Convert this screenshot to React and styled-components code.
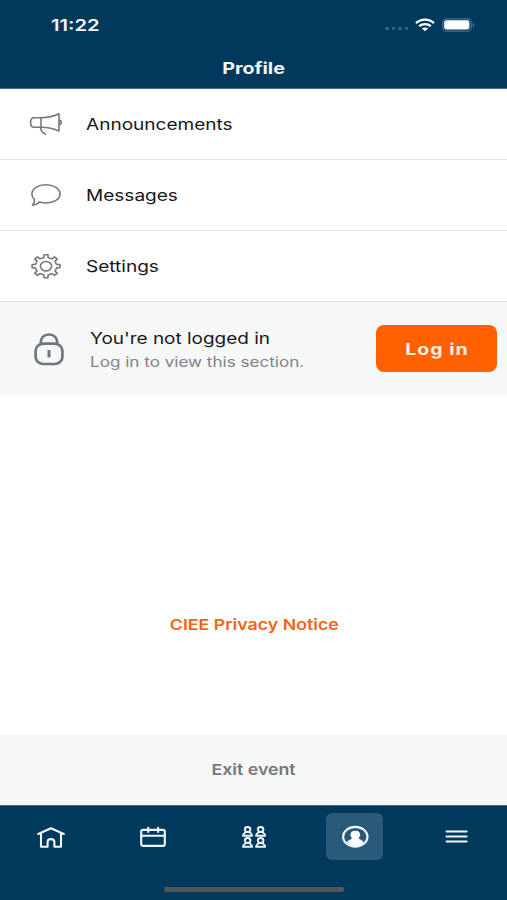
import React from 'react'
import styled, { createGlobalStyle } from 'styled-components'

// eight-toothed gear outline, slightly wider than tall
const gearPath = (cx, cy, rx, ry) => {
  const points = []
  const at = (deg, k) => {
    const a = (deg * Math.PI) / 180
    return `${(cx + Math.sin(a) * rx * k).toFixed(2)} ${(cy - Math.cos(a) * ry * k).toFixed(2)}`
  }
  for (let i = 0; i < 8; i++) {
    const d = i * 45
    points.push(at(d - 11, 0.77), at(d - 8, 1), at(d + 8, 1), at(d + 11, 0.77), at(d + 22.5, 0.75))
  }
  return `M${points.join('L')}Z`
}

const MegaphoneIcon = () => (
  <LineIcon width="36" height="30" viewBox="0 0 36 30">
    <path d="M13 8.8H6C3.4 8.8 2.6 10.6 2.6 13.5S3.4 18.2 6 18.2H13Z" />
    <path d="M13 8.8C19 8.6 26 7.3 31 4.8V21.9C26 19.7 19 18.4 13 18.2" />
    <path d="M31 11.2C34 11.3 34 15.6 31 15.7" />
    <path d="M12.4 18.4C12.8 21.6 14.5 23.9 17.3 25.1" />
  </LineIcon>
)

const MessageIcon = () => (
  <LineIcon width="36" height="30" viewBox="0 0 36 30">
    <path d="M6.4 19.4C4.7 17.8 3.9 15.9 3.9 13.9C3.9 8.7 10.2 4.8 18 4.8S32 8.7 32 13.9S25.8 23 18 23C15.7 23 13.6 22.7 11.7 22.1C9.6 23.9 7.3 25.2 4.5 25.2C6 23.6 6.7 21.5 6.4 19.4Z" />
  </LineIcon>
)

const GearIcon = () => (
  <LineIcon width="36" height="30" viewBox="0 0 36 30">
    <path d={gearPath(18, 15.2, 14.1, 11.6)} />
    <ellipse cx="18" cy="15.2" rx="5.6" ry="4.7" />
  </LineIcon>
)

const LockIcon = () => (
  <LockSvg width="34" height="36" viewBox="0 0 34 36">
    <path d="M8.6 12.6C8.6 7 12 3.5 17 3.5S25.4 7 25.4 12.6" />
    <rect x="3.6" y="12.7" width="26.8" height="20.3" rx="8" ry="7" />
    <path d="M17 19V26.4" strokeWidth="3" />
  </LockSvg>
)

const HomeIcon = () => (
  <TabSvg width="30" height="24" viewBox="0 0 30 24">
    <path d="M2.2 9L15 3.2L27.8 9" />
    <path d="M5 8.2V21.8H11.6V17C11.6 13.2 18.4 13.2 18.4 17V21.8H25V8.2" />
  </TabSvg>
)

const CalendarIcon = () => (
  <TabSvg width="30" height="24" viewBox="0 0 30 24">
    <rect x="4.2" y="4.9" width="23.6" height="16" rx="1.8" />
    <path d="M4.2 10.7H27.8M11.3 2.8V6.9M21.1 2.8V6.9" />
  </TabSvg>
)

const Person = ({ x, y }) => (
  <g transform={`translate(${x} ${y})`}>
    <ellipse cx="5.3" cy="3.3" rx="2.8" ry="2.5" />
    <path d="M3.7 5.6C3.6 6.7 .8 6.7 .7 9.5H9.9C9.8 6.7 7 6.7 6.9 5.6" />
  </g>
)

const PeopleIcon = () => (
  <TabSvg width="30" height="24" viewBox="0 0 30 24" $thin>
    <Person x={4.3} y={1.2} />
    <Person x={17.3} y={1.2} />
    <Person x={4.3} y={12.2} />
    <Person x={17.3} y={12.2} />
  </TabSvg>
)

const ProfileIcon = () => (
  <TabSvg width="30" height="24" viewBox="0 0 30 24">
    <ellipse cx="15.3" cy="11.8" rx="12.2" ry="9.9" />
    <path
      d="M15.3 5.7C18.4 5.7 20.1 7.2 20 9.4C20.4 9.8 20.3 11 19.6 11.3C19.4 12.2 19 12.8 18.7 13.2C19.4 14.8 22.9 14.8 23.7 17.8C19 22.2 11.6 22.2 6.9 17.8C7.7 14.8 11.2 14.8 11.9 13.2C11.6 12.8 11.2 12.2 11 11.3C10.3 11 10.2 9.8 10.6 9.4C10.5 7.2 12.2 5.7 15.3 5.7Z"
      fill="#fff"
      stroke="none"
    />
  </TabSvg>
)

const MenuIcon = () => (
  <TabSvg width="30" height="24" viewBox="0 0 30 24">
    <path d="M5.6 6.5H25.6M5.6 11.5H25.6M5.6 16.5H25.6" />
  </TabSvg>
)

const WifiIcon = () => (
  <svg width="20" height="14" viewBox="0 0 20 14" fill="none" stroke="#fff" strokeWidth="2.3">
    <path d="M1 5.1C6 .4 14 .4 19 5.1" />
    <path d="M4.2 8.2C7.4 5.3 12.6 5.3 15.8 8.2" />
    <path d="M10 13.2L6.9 10.6C8.6 9.2 11.4 9.2 13.1 10.6Z" fill="#fff" stroke="none" />
  </svg>
)

const BatteryIcon = () => (
  <svg width="33" height="14" viewBox="0 0 33 14">
    <rect x=".8" y=".8" width="28.4" height="12.4" rx="4" fill="none" stroke="#47708f" strokeWidth="1.3" />
    <rect x="2.2" y="2.2" width="25.2" height="9.4" rx="2.4" fill="#fff" />
    <path d="M30.6 4.8C33 5.4 33 8.6 30.6 9.2Z" fill="#47708f" />
  </svg>
)

const ROWS = [
  { label: 'Announcements', Icon: MegaphoneIcon },
  { label: 'Messages', Icon: MessageIcon },
  { label: 'Settings', Icon: GearIcon },
]

const TABS = [
  { name: 'Home', Icon: HomeIcon },
  { name: 'Calendar', Icon: CalendarIcon },
  { name: 'People', Icon: PeopleIcon },
  { name: 'Profile', Icon: ProfileIcon, active: true },
  { name: 'Menu', Icon: MenuIcon },
]

const App = () => {
  return (
    <Screen>
      <GlobalStyle />
      <Header>
        <StatusBar>
          <Clock $stretch={1.26}>11:22</Clock>
          <StatusIcons>
            <Signal>
              <i />
              <i />
              <i />
              <i />
            </Signal>
            <WifiIcon />
            <BatteryIcon />
          </StatusIcons>
        </StatusBar>
        <Title $stretch={1.23}>Profile</Title>
      </Header>

      <List>
        {ROWS.map(({ label, Icon }) => (
          <Row key={label}>
            <Icon />
            <RowLabel $stretch={1.19}>{label}</RowLabel>
          </Row>
        ))}
      </List>

      <LoginPanel>
        <LockIcon />
        <LoginText>
          <LoginTitle>You're not logged in</LoginTitle>
          <LoginHint $stretch={1.22}>Log in to view this section.</LoginHint>
        </LoginText>
        <LoginBtn>
          <BtnLabel $stretch={1.22}>Log in</BtnLabel>
        </LoginBtn>
      </LoginPanel>

      <Body>
        <Notice>CIEE Privacy Notice</Notice>
      </Body>

      <ExitBar>
        <ExitLabel>Exit event</ExitLabel>
      </ExitBar>

      <Footer>
        <Tabs>
          {TABS.map(({ name, Icon, active }) => (
            <Tab key={name} aria-label={name} $active={active}>
              <Icon />
            </Tab>
          ))}
        </Tabs>
        <HomeBar />
      </Footer>
    </Screen>
  )
}

const GlobalStyle = createGlobalStyle`
  body {
    margin: 0;
    background: #fff;
  }
  * {
    box-sizing: border-box;
  }
`

const Screen = styled.div`
  width: 507px;
  height: 900px;
  display: flex;
  flex-direction: column;
  overflow: hidden;
  background-color: #fff;
  font-family: Inter, 'Liberation Sans', sans-serif;
`

// all lettering is set wide
const Wide = styled.span`
  display: block;
  width: max-content;
  font-size: 16px;
  line-height: 20px;
  white-space: nowrap;
  transform: scaleX(${({ $stretch }) => $stretch || 1.185});
  transform-origin: left center;
`

const Header = styled.header`
  height: 89px;
  flex: none;
  display: flex;
  flex-direction: column;
  align-items: center;
  background-color: #01395c;
  border-bottom: 1px solid #4a6c8b;
`

const StatusBar = styled.div`
  width: 100%;
  height: 48px;
  display: flex;
  justify-content: space-between;
  align-items: center;
  padding: 2px 32px 0 51px;
`

const Clock = styled(Wide)`
  font-weight: 600;
  color: #f1f6ff;
`

const StatusIcons = styled.div`
  display: flex;
  align-items: center;
  gap: 7px;
  padding-bottom: 1px;
`

const Signal = styled.div`
  display: flex;
  gap: 3px;
  padding-top: 8px;
  i {
    width: 3.4px;
    height: 3px;
    border-radius: 50%;
    background-color: #3f6885;
  }
`

const Title = styled(Wide)`
  margin: 10px 0 0 1px;
  font-weight: 700;
  color: #f1f6ff;
  transform-origin: center;
`

const List = styled.div`
  flex: none;
`

const Row = styled.div`
  height: 71px;
  display: flex;
  align-items: center;
  gap: 22px;
  padding-left: 28px;
  border-bottom: 1px solid #e4e5e6;
`

const RowLabel = styled(Wide)`
  color: #17181a;
`

const LineIcon = styled.svg`
  flex: none;
  fill: none;
  stroke: #74797e;
  stroke-width: 1.6;
  stroke-linecap: round;
  stroke-linejoin: round;
`

const LoginPanel = styled.section`
  height: 93px;
  flex: none;
  display: flex;
  align-items: center;
  padding: 0 10px 0 32px;
  background-color: #f6f7f7;
`

const LockSvg = styled.svg`
  flex: none;
  fill: none;
  stroke: #6e757b;
  stroke-width: 2.7;
`

const LoginText = styled.div`
  flex: 1;
  display: flex;
  flex-direction: column;
  gap: 4px;
  margin-left: 24px;
  padding-top: 2px;
`

const LoginTitle = styled(Wide)`
  color: #17181a;
`

const LoginHint = styled(Wide)`
  font-size: 14px;
  color: #7f8387;
`

const LoginBtn = styled.button`
  width: 121px;
  height: 47px;
  display: flex;
  justify-content: center;
  align-items: center;
  padding: 0;
  background-color: #ff6000;
  border: none;
  border-radius: 8px;
  font-family: inherit;
  cursor: pointer;
`

const BtnLabel = styled(Wide)`
  font-weight: 700;
  letter-spacing: 0.8px;
  color: #fff3e8;
  transform-origin: center;
`

const Body = styled.main`
  flex: 1;
  display: flex;
  flex-direction: column;
  justify-content: flex-end;
  align-items: center;
  padding-bottom: 99px;
`

const Notice = styled(Wide)`
  margin-left: 1px;
  font-size: 15px;
  font-weight: 600;
  color: #f9620f;
  transform-origin: center;
`

const ExitBar = styled.div`
  height: 71px;
  flex: none;
  display: flex;
  justify-content: center;
  align-items: center;
  background-color: #f6f7f7;
`

const ExitLabel = styled(Wide)`
  margin-left: 1px;
  font-size: 15px;
  font-weight: 600;
  color: #74787c;
  transform-origin: center;
`

const Footer = styled.footer`
  height: 95px;
  flex: none;
  display: flex;
  flex-direction: column;
  align-items: center;
  background-color: #01395c;
  border-top: 1px solid #4a6c8b;
`

const Tabs = styled.nav`
  width: 100%;
  height: 47px;
  margin-top: 7px;
  display: grid;
  grid-template-columns: repeat(5, 1fr);
  justify-items: center;
`

const Tab = styled.button`
  width: 57px;
  height: 47px;
  display: flex;
  justify-content: center;
  align-items: center;
  padding: 0;
  border: none;
  border-radius: 6px;
  background-color: ${({ $active }) => ($active ? '#2a5a79' : 'transparent')};
  cursor: pointer;
`

const TabSvg = styled.svg`
  fill: none;
  stroke: #f1f7ff;
  stroke-width: ${({ $thin }) => ($thin ? 1.9 : 2.1)};
  stroke-linecap: round;
  stroke-linejoin: round;
`

const HomeBar = styled.div`
  width: 180px;
  height: 5px;
  margin-top: 27px;
  border-radius: 2px;
  background-color: #55565b;
`

export default App
